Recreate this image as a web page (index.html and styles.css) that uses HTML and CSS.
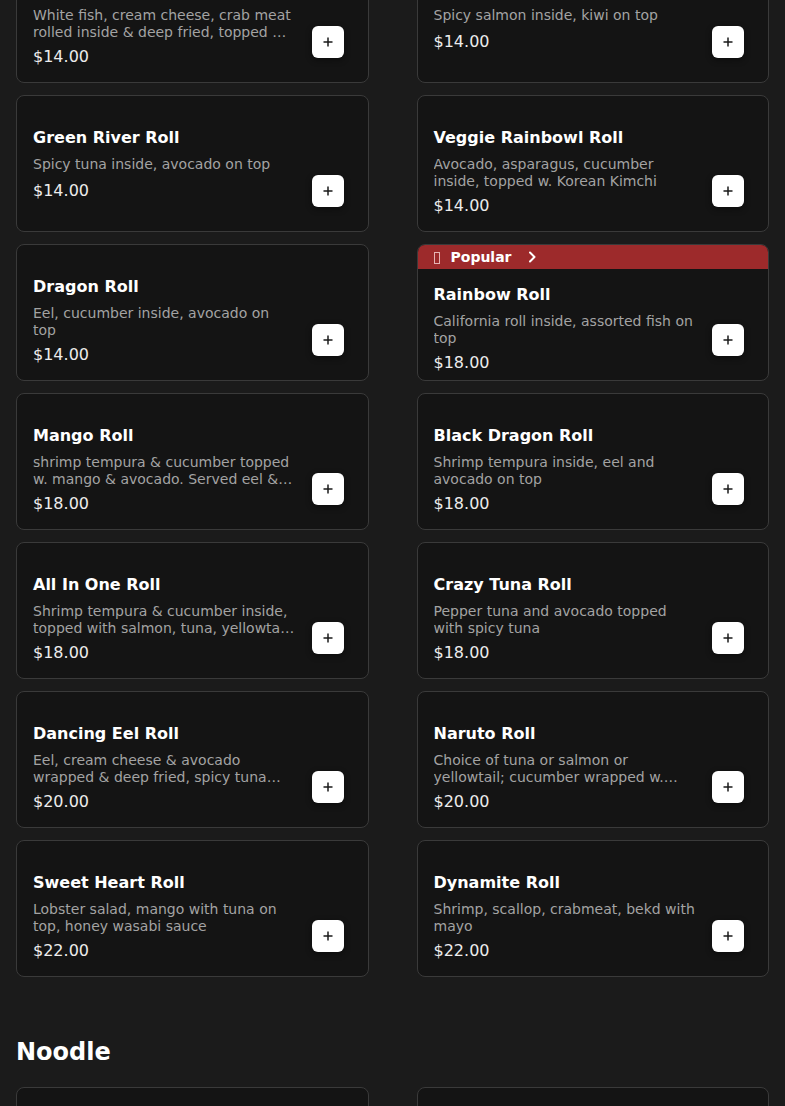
FILE: index.html
```html
<!DOCTYPE html>
<html lang="en">
<head>
<meta charset="utf-8">
<title>Menu</title>
<link rel="stylesheet" href="styles.css">
</head>
<body>
<main class="menu">
  <section class="section first">
    <div class="grid">
      <article class="card">
        <div class="body">
          <div class="info">
            <h3 class="title">Las Vegas Roll</h3>
            <p class="desc">White fish, cream cheese, crab meat rolled inside &amp; deep fried, topped w. eel sauce &amp; spicy mayo</p>
            <div class="price">$14.00</div>
          </div>
          <div class="action"><button class="add" aria-label="Add"><svg width="10" height="10" viewBox="0 0 10 10" aria-hidden="true"><path d="M5 0.5V9.5M0.5 5H9.5" stroke="#1a1a1a" stroke-width="1.5"/></svg></button></div>
        </div>
      </article>
      <article class="card">
        <div class="body">
          <div class="info">
            <h3 class="title">Kiwi Roll</h3>
            <p class="desc">Spicy salmon inside, kiwi on top</p>
            <div class="price">$14.00</div>
          </div>
          <div class="action"><button class="add" aria-label="Add"><svg width="10" height="10" viewBox="0 0 10 10" aria-hidden="true"><path d="M5 0.5V9.5M0.5 5H9.5" stroke="#1a1a1a" stroke-width="1.5"/></svg></button></div>
        </div>
      </article>
      <article class="card">
        <div class="body">
          <div class="info">
            <h3 class="title">Green River Roll</h3>
            <p class="desc">Spicy tuna inside, avocado on top</p>
            <div class="price">$14.00</div>
          </div>
          <div class="action"><button class="add" aria-label="Add"><svg width="10" height="10" viewBox="0 0 10 10" aria-hidden="true"><path d="M5 0.5V9.5M0.5 5H9.5" stroke="#1a1a1a" stroke-width="1.5"/></svg></button></div>
        </div>
      </article>
      <article class="card">
        <div class="body">
          <div class="info">
            <h3 class="title">Veggie Rainbowl Roll</h3>
            <p class="desc">Avocado, asparagus, cucumber inside, topped w. Korean Kimchi</p>
            <div class="price">$14.00</div>
          </div>
          <div class="action"><button class="add" aria-label="Add"><svg width="10" height="10" viewBox="0 0 10 10" aria-hidden="true"><path d="M5 0.5V9.5M0.5 5H9.5" stroke="#1a1a1a" stroke-width="1.5"/></svg></button></div>
        </div>
      </article>
      <article class="card">
        <div class="body">
          <div class="info">
            <h3 class="title">Dragon Roll</h3>
            <p class="desc">Eel, cucumber inside, avocado on top</p>
            <div class="price">$14.00</div>
          </div>
          <div class="action"><button class="add" aria-label="Add"><svg width="10" height="10" viewBox="0 0 10 10" aria-hidden="true"><path d="M5 0.5V9.5M0.5 5H9.5" stroke="#1a1a1a" stroke-width="1.5"/></svg></button></div>
        </div>
      </article>
      <article class="card popular">
        <div class="badge">
          <span class="tofu" aria-hidden="true"></span>
          <span class="badge-text">Popular</span>
          <svg class="chev" width="8" height="12" viewBox="0 0 8 12" aria-hidden="true"><path d="M2 1.5 L6.5 6 L2 10.5" fill="none" stroke="#fff" stroke-width="2" stroke-linecap="round" stroke-linejoin="round"/></svg>
        </div>
        <div class="body">
          <div class="info">
            <h3 class="title">Rainbow Roll</h3>
            <p class="desc">California roll inside, assorted fish on top</p>
            <div class="price">$18.00</div>
          </div>
          <div class="action"><button class="add" aria-label="Add"><svg width="10" height="10" viewBox="0 0 10 10" aria-hidden="true"><path d="M5 0.5V9.5M0.5 5H9.5" stroke="#1a1a1a" stroke-width="1.5"/></svg></button></div>
        </div>
      </article>
      <article class="card">
        <div class="body">
          <div class="info">
            <h3 class="title">Mango Roll</h3>
            <p class="desc">shrimp tempura &amp; cucumber topped w. mango &amp; avocado. Served eel &amp; mango sauce</p>
            <div class="price">$18.00</div>
          </div>
          <div class="action"><button class="add" aria-label="Add"><svg width="10" height="10" viewBox="0 0 10 10" aria-hidden="true"><path d="M5 0.5V9.5M0.5 5H9.5" stroke="#1a1a1a" stroke-width="1.5"/></svg></button></div>
        </div>
      </article>
      <article class="card">
        <div class="body">
          <div class="info">
            <h3 class="title">Black Dragon Roll</h3>
            <p class="desc">Shrimp tempura inside, eel and avocado on top</p>
            <div class="price">$18.00</div>
          </div>
          <div class="action"><button class="add" aria-label="Add"><svg width="10" height="10" viewBox="0 0 10 10" aria-hidden="true"><path d="M5 0.5V9.5M0.5 5H9.5" stroke="#1a1a1a" stroke-width="1.5"/></svg></button></div>
        </div>
      </article>
      <article class="card">
        <div class="body">
          <div class="info">
            <h3 class="title">All In One Roll</h3>
            <p class="desc">Shrimp tempura &amp; cucumber inside, topped with salmon, tuna, yellowtail, avocado</p>
            <div class="price">$18.00</div>
          </div>
          <div class="action"><button class="add" aria-label="Add"><svg width="10" height="10" viewBox="0 0 10 10" aria-hidden="true"><path d="M5 0.5V9.5M0.5 5H9.5" stroke="#1a1a1a" stroke-width="1.5"/></svg></button></div>
        </div>
      </article>
      <article class="card">
        <div class="body">
          <div class="info">
            <h3 class="title">Crazy Tuna Roll</h3>
            <p class="desc">Pepper tuna and avocado topped with spicy tuna</p>
            <div class="price">$18.00</div>
          </div>
          <div class="action"><button class="add" aria-label="Add"><svg width="10" height="10" viewBox="0 0 10 10" aria-hidden="true"><path d="M5 0.5V9.5M0.5 5H9.5" stroke="#1a1a1a" stroke-width="1.5"/></svg></button></div>
        </div>
      </article>
      <article class="card">
        <div class="body">
          <div class="info">
            <h3 class="title">Dancing Eel Roll</h3>
            <p class="desc">Eel, cream cheese &amp; avocado wrapped &amp; deep fried, spicy tuna mix on top</p>
            <div class="price">$20.00</div>
          </div>
          <div class="action"><button class="add" aria-label="Add"><svg width="10" height="10" viewBox="0 0 10 10" aria-hidden="true"><path d="M5 0.5V9.5M0.5 5H9.5" stroke="#1a1a1a" stroke-width="1.5"/></svg></button></div>
        </div>
      </article>
      <article class="card">
        <div class="body">
          <div class="info">
            <h3 class="title">Naruto Roll</h3>
            <p class="desc">Choice of tuna or salmon or yellowtail; cucumber wrapped w. avocado, no rice</p>
            <div class="price">$20.00</div>
          </div>
          <div class="action"><button class="add" aria-label="Add"><svg width="10" height="10" viewBox="0 0 10 10" aria-hidden="true"><path d="M5 0.5V9.5M0.5 5H9.5" stroke="#1a1a1a" stroke-width="1.5"/></svg></button></div>
        </div>
      </article>
      <article class="card">
        <div class="body">
          <div class="info">
            <h3 class="title">Sweet Heart Roll</h3>
            <p class="desc">Lobster salad, mango with tuna on top, honey wasabi sauce</p>
            <div class="price">$22.00</div>
          </div>
          <div class="action"><button class="add" aria-label="Add"><svg width="10" height="10" viewBox="0 0 10 10" aria-hidden="true"><path d="M5 0.5V9.5M0.5 5H9.5" stroke="#1a1a1a" stroke-width="1.5"/></svg></button></div>
        </div>
      </article>
      <article class="card">
        <div class="body">
          <div class="info">
            <h3 class="title">Dynamite Roll</h3>
            <p class="desc">Shrimp, scallop, crabmeat, bekd with mayo</p>
            <div class="price">$22.00</div>
          </div>
          <div class="action"><button class="add" aria-label="Add"><svg width="10" height="10" viewBox="0 0 10 10" aria-hidden="true"><path d="M5 0.5V9.5M0.5 5H9.5" stroke="#1a1a1a" stroke-width="1.5"/></svg></button></div>
        </div>
      </article>
    </div>
  </section>

  <section class="section">
    <h2 class="section-title">Noodle</h2>
    <div class="grid">
      <article class="card">
        <div class="body">
          <div class="info">
            <h3 class="title">Beef Udon</h3>
            <p class="desc">Udon noodle soup with sliced beef</p>
            <div class="price">$16.00</div>
          </div>
          <div class="action"><button class="add" aria-label="Add"><svg width="10" height="10" viewBox="0 0 10 10" aria-hidden="true"><path d="M5 0.5V9.5M0.5 5H9.5" stroke="#1a1a1a" stroke-width="1.5"/></svg></button></div>
        </div>
      </article>
      <article class="card">
        <div class="body">
          <div class="info">
            <h3 class="title">Tempura Udon</h3>
            <p class="desc">Udon noodle soup with shrimp tempura</p>
            <div class="price">$16.00</div>
          </div>
          <div class="action"><button class="add" aria-label="Add"><svg width="10" height="10" viewBox="0 0 10 10" aria-hidden="true"><path d="M5 0.5V9.5M0.5 5H9.5" stroke="#1a1a1a" stroke-width="1.5"/></svg></button></div>
        </div>
      </article>
    </div>
  </section>
</main>
</body>
</html>
```

FILE: styles.css
```css
* { box-sizing: border-box; }

html, body {
  margin: 0;
  padding: 0;
  background: #1b1b1b;
  color: #fff;
  font-family: "DejaVu Sans", "Noto Sans", sans-serif;
}

.menu {
  padding: 0 16px;
  margin-top: -54px;
}

.section-title {
  margin: 59px 0 19px;
  font-size: 24px;
  line-height: 32px;
  font-weight: 700;
  color: #fff;
}

.grid {
  display: grid;
  grid-template-columns: 1fr 1fr;
  column-gap: 48px;
  row-gap: 12px;
  grid-auto-rows: 137px;
}

.card {
  display: flex;
  flex-direction: column;
  background: #141414;
  border: 1px solid #3a3a3a;
  border-radius: 8px;
  overflow: hidden;
}

.badge {
  display: flex;
  align-items: center;
  height: 24px;
  flex: none;
  padding: 0 16px;
  background: #9d2a2b;
  color: #fff;
  font-size: 14px;
  font-weight: 700;
}

.tofu {
  width: 6px;
  height: 12px;
  border: 1px solid #e6b3b3;
  margin: 1px 11px 0 0;
}

.badge .chev { margin-left: 16px; }

.body {
  flex: 1;
  display: flex;
  min-height: 0;
  padding: 30px 24px 24px 16px;
}

.popular .body { padding-top: 14px; }

.info {
  flex: 1;
  min-width: 0;
  padding-right: 16px;
}

.title {
  margin: 0;
  font-size: 16px;
  line-height: 24px;
  font-weight: 700;
  color: #fff;
}

.desc {
  margin: 6px 0 0;
  min-height: 19px;
  font-size: 14px;
  line-height: 17px;
  color: #a3a3a3;
  display: -webkit-box;
  -webkit-line-clamp: 2;
  -webkit-box-orient: vertical;
  overflow: hidden;
}

.price {
  margin-top: 4px;
  font-size: 16px;
  line-height: 24px;
  color: #ececec;
}

.action {
  flex: none;
  align-self: flex-end;
}

.add {
  display: flex;
  align-items: center;
  justify-content: center;
  width: 32px;
  height: 32px;
  padding: 0;
  border: none;
  border-radius: 6px;
  background: #fff;
  box-shadow: 0 2px 6px rgba(0, 0, 0, 0.45);
  cursor: pointer;
}
```
